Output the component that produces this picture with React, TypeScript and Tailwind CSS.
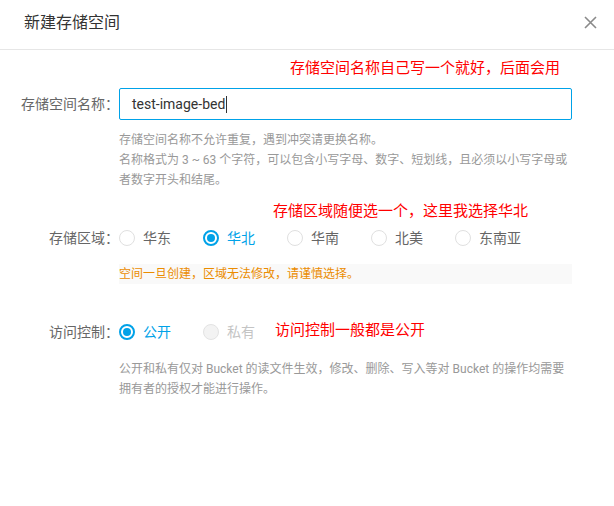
const regions = ['华东', '华北', '华南', '北美', '东南亚'];

function Radio({ checked = false, disabled = false }: { checked?: boolean; disabled?: boolean }) {
  if (disabled) {
    return <span className="h-4 w-4 shrink-0 rounded-full border border-[#e3e3e3] bg-[#f3f3f3]" />;
  }
  return (
    <span
      className={
        checked
          ? 'flex h-4 w-4 shrink-0 items-center justify-center rounded-full border-2 border-[#00a2e8] bg-white'
          : 'h-4 w-4 shrink-0 rounded-full border border-[#e0e0e0] bg-white'
      }
    >
      {checked && <span className="h-2 w-2 rounded-full bg-[#00a2e8]" />}
    </span>
  );
}

function Label({ children }: { children: React.ReactNode }) {
  return (
    <div className="w-[119px] shrink-0 whitespace-nowrap text-right text-[14px] text-[#666]">{children}</div>
  );
}

export default function App() {
  return (
    <div
      className="h-[506px] w-[614px] bg-white"
      style={{ fontFamily: 'Roboto, "Noto Sans CJK SC", sans-serif' }}
    >
      <div className="flex h-[50px] items-center justify-between border-b border-[#e6e6e6] pb-[4px] pl-6 pr-4">
        <h1 className="text-[16px] text-[#333]">新建存储空间</h1>
        <svg width="13" height="13" viewBox="0 0 13 13" className="mr-[1px]">
          <path d="M1 1 L12 12 M12 1 L1 12" stroke="#8a8a8a" strokeWidth="1.6" fill="none" />
        </svg>
      </div>

      <p className="mt-2 ml-[290px] text-[15px] leading-5 text-[#ff0000]">存储空间名称自己写一个就好，后面会用</p>

      <div className="mt-[10px] flex items-center">
        <Label>存储空间名称：</Label>
        <div className="flex h-8 w-[453px] items-center rounded-[2px] border border-[#00a2e8] pl-3 text-[14px] text-[#333]">
          test-image-bed
          <span className="ml-[1px] h-[17px] w-px bg-[#333]" />
        </div>
      </div>

      <div className="ml-[119px] mt-[10px] w-[454px] text-[12px] leading-5 text-[#999]">
        <p>存储空间名称不允许重复，遇到冲突请更换名称。</p>
        <p>名称格式为 3 ~ 63 个字符，可以包含小写字母、数字、短划线，且必须以小写字母或者数字开头和结尾。</p>
      </div>

      <p className="mt-[11px] ml-[273px] text-[15px] leading-5 text-[#ff0000]">存储区域随便选一个，这里我选择华北</p>

      <div className="mt-[7px] flex h-5 items-center">
        <Label>存储区域：</Label>
        <div className="flex items-center">
          {regions.map((r) => (
            <div key={r} className="flex w-[84px] items-center gap-2">
              <Radio checked={r === '华北'} />
              <span className={r === '华北' ? 'text-[14px] text-[#00a2e8]' : 'text-[14px] text-[#666]'}>{r}</span>
            </div>
          ))}
        </div>
      </div>

      <div className="ml-[119px] mt-4 h-5 w-[453px] bg-[#f9f9f9] text-[12px] leading-5 text-[#eb8c00]">
        空间一旦创建，区域无法修改，请谨慎选择。
      </div>

      <div className="mt-[38px] flex h-5 items-center">
        <Label>访问控制：</Label>
        <div className="flex w-[84px] items-center gap-2">
          <Radio checked />
          <span className="text-[14px] text-[#00a2e8]">公开</span>
        </div>
        <div className="flex items-center gap-2">
          <Radio disabled />
          <span className="text-[14px] text-[#c4c4c4]">私有</span>
        </div>
        <span className="mb-[5px] ml-5 text-[15px] leading-5 text-[#ff0000]">访问控制一般都是公开</span>
      </div>

      <div className="ml-[119px] mt-[17px] w-[454px] text-[12px] leading-5 text-[#999]">
        公开和私有仅对 Bucket 的读文件生效，修改、删除、写入等对 Bucket 的操作均需要拥有者的授权才能进行操作。
      </div>
    </div>
  );
}
